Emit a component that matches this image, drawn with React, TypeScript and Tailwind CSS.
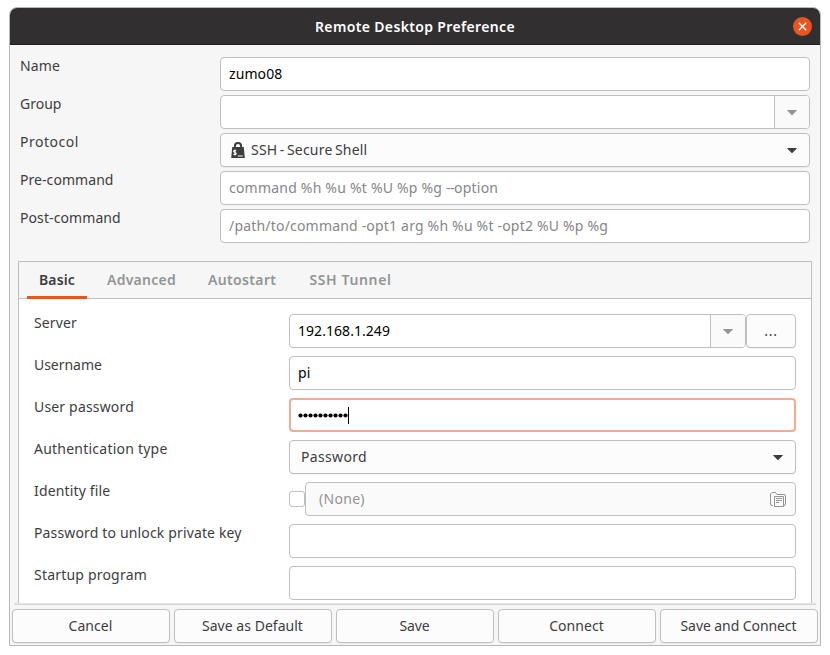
import type { ReactNode } from "react";

const box = "flex h-[34px] items-center rounded-[4px] border border-[#c0bfbf]";

function Caret({ className }: { className: string }) {
  return (
    <svg width="10" height="5" viewBox="0 0 10 5" className={className} fill="currentColor">
      <path d="M0 0.3Q0 0 .4 0H9.6Q10 0 10 .3L5.6 4.7Q5 5.2 4.4 4.7Z" />
    </svg>
  );
}

function Entry({ children, className = "" }: { children?: ReactNode; className?: string }) {
  return <div className={`${box} bg-white pl-2 text-black ${className}`}>{children}</div>;
}

function ComboEntry({ children, className = "" }: { children?: ReactNode; className?: string }) {
  return (
    <div className={`${box} overflow-hidden bg-white text-black ${className}`}>
      <div className="flex-1 pl-2">{children}</div>
      <div className="flex h-full w-[35px] items-center justify-center border-l border-[#c0bfbf] bg-[#fafafa]">
        <Caret className="text-[#939393]" />
      </div>
    </div>
  );
}

function Select({ children, className = "" }: { children: ReactNode; className?: string }) {
  return (
    <div className={`${box} justify-between bg-[#fcfcfc] pr-3 text-[#3d3d3d] shadow-[0_1px_1px_rgba(0,0,0,0.05)] ${className}`}>
      {children}
      <Caret className="text-[#3d3d3d]" />
    </div>
  );
}

function ProfileRow({ label, tracking, children }: { label: string; tracking: string; children: ReactNode }) {
  return (
    <div className="grid grid-cols-[200px_1fr]">
      <span className={tracking}>{label}</span>
      {children}
    </div>
  );
}

function BasicRow({ label, tracking, children }: { label: string; tracking: string; children: ReactNode }) {
  return (
    <div className="grid grid-cols-[255px_1fr]">
      <span className={tracking}>{label}</span>
      {children}
    </div>
  );
}

function LockIcon() {
  return (
    <svg width="14" height="16" viewBox="0 0 14 16">
      <path d="M3.9 6V4.2a3.1 3.1 0 0 1 6.2 0V6" fill="none" stroke="#3d3d3d" strokeWidth="2" />
      <path d="M1.2 5H12.8L13.8 16H.2Z" fill="#3d3d3d" />
      <path
        d="M5.2 8.7C4.2 8.1 2.6 8.2 2.6 9.3c0 1.5 2.7.9 2.7 2.3 0 1.2-1.8 1.3-2.9.7M3.9 7.4V13.6M6.8 14h5"
        fill="none"
        stroke="#fcfcfc"
        strokeWidth="1.1"
      />
    </svg>
  );
}

function FolderIcon() {
  return (
    <svg width="16" height="15" viewBox="0 0 16 15" fill="none" stroke="#939393">
      <path d="M3 13.5H2A1.5 1.5 0 0 1 .5 12V2L2 .5H5.5L7 2.5H14A1.5 1.5 0 0 1 15.5 4V12A1.5 1.5 0 0 1 14 13.5" />
      <path d="M4.5 4.5H13.5V14.5H4.5ZM6 6.5H12M6 8.5H12M6 10.5H9" />
    </svg>
  );
}

const actions = [
  { label: "Cancel", tracking: "tracking-[0.07px]" },
  { label: "Save as Default", tracking: "tracking-[0.03px]" },
  { label: "Save", tracking: "tracking-[-0.13px]" },
  { label: "Connect", tracking: "tracking-[0.03px]" },
  { label: "Save and Connect", tracking: "tracking-[-0.08px]" },
];

export default function App() {
  return (
    <div className="h-[655px] w-[830px] overflow-hidden bg-white pt-[7px] pl-[9px] font-['Noto_Sans','Open_Sans',sans-serif] text-[14px] leading-[18px] whitespace-pre text-[#3d3d3d]">
      <div className="flex h-[639px] w-[812px] flex-col overflow-hidden rounded-t-[8px] border border-[#b9b8b8] bg-[#f6f6f6]">
        <header className="grid h-[37px] shrink-0 grid-cols-[1fr_auto_1fr] items-center border-b border-[#1d1c1c] bg-[#322f30] px-2 pt-px">
          <span />
          <h1 className="font-semibold tracking-[0.35px] text-white">Remote Desktop Preference</h1>
          <button className="mb-px flex size-[19px] items-center justify-center justify-self-end rounded-full bg-[#e95420]">
            <svg width="9" height="9" viewBox="0 0 9 9" stroke="white" strokeWidth="1.3">
              <path d="M.8.8 8.2 8.2M8.2.8.8 8.2" />
            </svg>
          </button>
        </header>

        <section className="flex flex-col gap-1 pt-3 pr-[10px] pl-[10px]">
          <ProfileRow label="Name" tracking="tracking-[0.1px]">
            <Entry className="tracking-[0.1px]">zumo08</Entry>
          </ProfileRow>
          <ProfileRow label="Group" tracking="tracking-normal">
            <ComboEntry />
          </ProfileRow>
          <ProfileRow label="Protocol" tracking="tracking-[0.53px]">
            <Select className="pl-[10px]">
              <span className="flex items-center gap-[6px] tracking-[0.2px] [word-spacing:-1.4px]">
                <LockIcon />
                SSH - Secure Shell
              </span>
            </Select>
          </ProfileRow>
          <ProfileRow label="Pre-command" tracking="tracking-[0.06px]">
            <Entry className="tracking-[0.21px]">
              <span className="text-[#868686]">
                command %h %u %t %U %p %g <span className="tracking-[-0.5px]">--</span>option
              </span>
            </Entry>
          </ProfileRow>
          <ProfileRow label="Post-command" tracking="tracking-[0.09px]">
            <Entry className="tracking-[0.19px]">
              <span className="text-[#868686]">/path/to/command -opt1 arg %h %u %t -opt2 %U %p %g</span>
            </Entry>
          </ProfileRow>
        </section>

        <section className="mx-2 mt-[18px] flex h-[342px] flex-col overflow-hidden border-x border-t border-[#c0bfbf] bg-white">
          <nav className="flex h-[37px] shrink-0 border-b border-[#c0bfbf] bg-[#f6f6f6] pl-2 font-semibold text-[#929595]">
            <span className="-mb-px flex h-[37px] w-[60px] items-center justify-center border-b-[3px] border-[#e95420] pt-[2px] tracking-[0.14px] text-[#3d3d3d]">
              Basic
            </span>
            <span className="flex items-center pl-5 tracking-[0.25px]">Advanced</span>
            <span className="flex items-center pl-8 tracking-[0.36px]">Autostart</span>
            <span className="flex items-center pl-[33px] tracking-[0.64px]">SSH Tunnel</span>
          </nav>
          <div className="flex flex-col gap-2 pt-[15px] pr-[15px] pl-[15px]">
            <BasicRow label="Server" tracking="tracking-[0.12px]">
              <div className="flex">
                <ComboEntry className="flex-1 tracking-[0.05px]">192.168.1.249</ComboEntry>
                <button className={`${box} w-[50px] justify-center bg-[#fcfcfc] tracking-[0.8px] shadow-[0_1px_1px_rgba(0,0,0,0.05)]`}>...</button>
              </div>
            </BasicRow>
            <BasicRow label="Username" tracking="tracking-[-0.04px]">
              <Entry className="tracking-[0.14px]">pi</Entry>
            </BasicRow>
            <BasicRow label="User password" tracking="tracking-[0.17px]">
              <div className="flex h-[34px] items-center rounded-[4px] border-2 border-[#f4aa90] bg-white pl-[7px]">
                <svg width="50" height="5" viewBox="0 0 50 5" fill="black">
                  {Array.from({ length: 10 }, (_, i) => (
                    <circle key={i} cx={i * 5 + 2.5} cy="2.5" r="2.1" />
                  ))}
                </svg>
                <span className="h-[17px] w-px bg-black" />
              </div>
            </BasicRow>
            <BasicRow label="Authentication type" tracking="tracking-[0.23px]">
              <Select className="pl-[11px] tracking-[0.33px]">Password</Select>
            </BasicRow>
            <BasicRow label="Identity file" tracking="tracking-[0.16px]">
              <div className="flex items-center">
                <span className="size-4 rounded-[3px] border border-[#c0bfbf] bg-white" />
                <div className={`${box} flex-1 justify-between bg-[#fafafa] pr-[9px] pl-[13px] tracking-[0.3px] text-[#939393]`}>
                  (None)
                  <FolderIcon />
                </div>
              </div>
            </BasicRow>
            <BasicRow label="Password to unlock private key" tracking="tracking-[0.15px]">
              <Entry />
            </BasicRow>
            <BasicRow label="Startup program" tracking="tracking-[0.2px]">
              <Entry />
            </BasicRow>
          </div>
        </section>

        <div className="mr-1 ml-1 h-[2px] shrink-0 border-t border-[#e4e4e4] bg-[#d6d6d6]" />
        <footer className="mt-1 grid grid-cols-5 gap-1 px-[2px]">
          {actions.map((a) => (
            <button key={a.label} className={`${box} justify-center bg-[#fcfcfc] pr-px shadow-[0_1px_1px_rgba(0,0,0,0.05)] ${a.tracking}`}>
              {a.label}
            </button>
          ))}
        </footer>
      </div>
    </div>
  );
}
